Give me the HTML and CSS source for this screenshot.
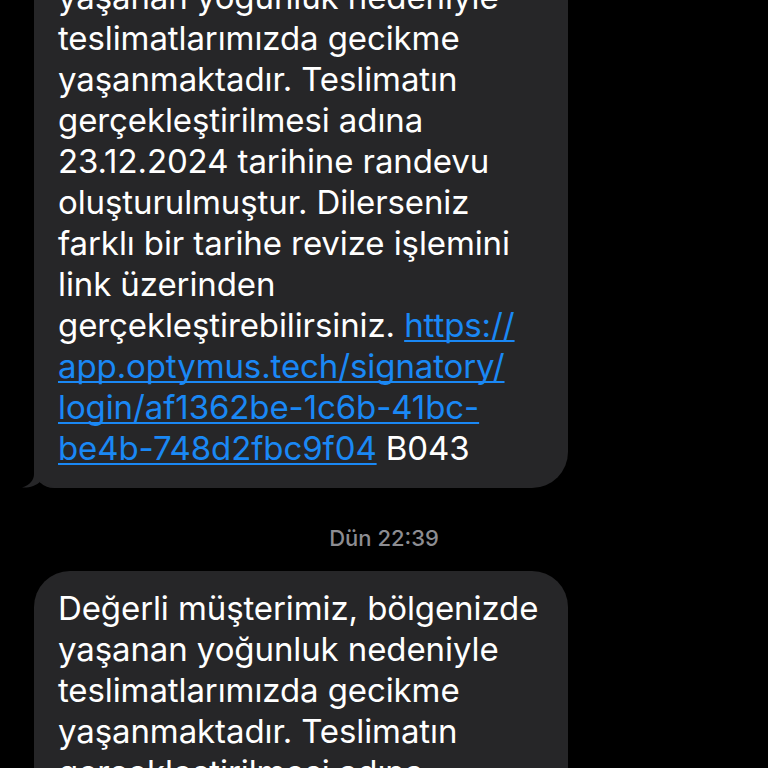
FILE: index.html
```html
<!DOCTYPE html>
<html lang="tr">
<head>
<meta charset="utf-8">
<link rel="stylesheet" href="styles.css">
</head>
<body>
<div class="thread">
  <div class="bubble tail">
    <p class="msg">Değerli müşterimiz, bölgenizde<br>yaşanan yoğunluk nedeniyle<br>teslimatlarımızda gecikme<br>yaşanmaktadır. Teslimatın<br>gerçekleştirilmesi adına<br>23.12.2024 tarihine randevu<br>oluşturulmuştur. Dilerseniz<br>farklı bir tarihe revize işlemini<br>link üzerinden<br>gerçekleştirebilirsiniz. <a class="link">https://<br>app.optymus.tech/signatory/<br>login/af1362be-1c6b-41bc-<br>be4b-748d2fbc9f04</a> B043</p>
    <svg class="tail-svg" width="30" height="26" viewBox="0 0 30 26"><path d="M12 0 L12 12 C12 18 8 23 0 25.5 C7 26 14 24 19 19 C23 22 27 24 30 25 L30 0 Z" fill="#262628"/></svg>
  </div>
  <div class="stamp">Dün 22:39</div>
  <div class="bubble">
    <p class="msg">Değerli müşterimiz, bölgenizde<br>yaşanan yoğunluk nedeniyle<br>teslimatlarımızda gecikme<br>yaşanmaktadır. Teslimatın<br>gerçekleştirilmesi adına<br>23.12.2024 tarihine randevu</p>
  </div>
</div>
</body>
</html>
```
FILE: styles.css
```css
html, body {
  margin: 0;
  padding: 0;
  background: #000;
  overflow: hidden;
}
body {
  width: 768px;
  height: 768px;
  font-family: Inter, "Noto Sans", "Liberation Sans", sans-serif;
}
.thread {
  margin-top: -81px;
  padding-left: 34px;
  display: flex;
  flex-direction: column;
  align-items: flex-start;
}
.bubble {
  position: relative;
  width: 534px;
  box-sizing: border-box;
  background: #262628;
  border-radius: 36px;
  padding: 17px 20px 19px 24px;
}
.bubble.tail {
  border-bottom-left-radius: 20px;
}
.tail-svg {
  position: absolute;
  left: -12px;
  bottom: 0;
}
.msg {
  margin: 0;
  color: #fff;
  font-size: 33px;
  line-height: 41px;
  white-space: nowrap;
  letter-spacing: -0.1px;
}
.link {
  color: #1a88f5;
  text-decoration: underline;
  text-decoration-thickness: 2px;
  text-underline-offset: 3px;
  text-decoration-skip-ink: none;
}
.stamp {
  align-self: stretch;
  margin-left: -34px;
  text-align: center;
  color: #8d8d92;
  font-size: 22px;
  font-weight: 500;
  line-height: 26px;
  padding: 37px 0 20px 0;
}
```
